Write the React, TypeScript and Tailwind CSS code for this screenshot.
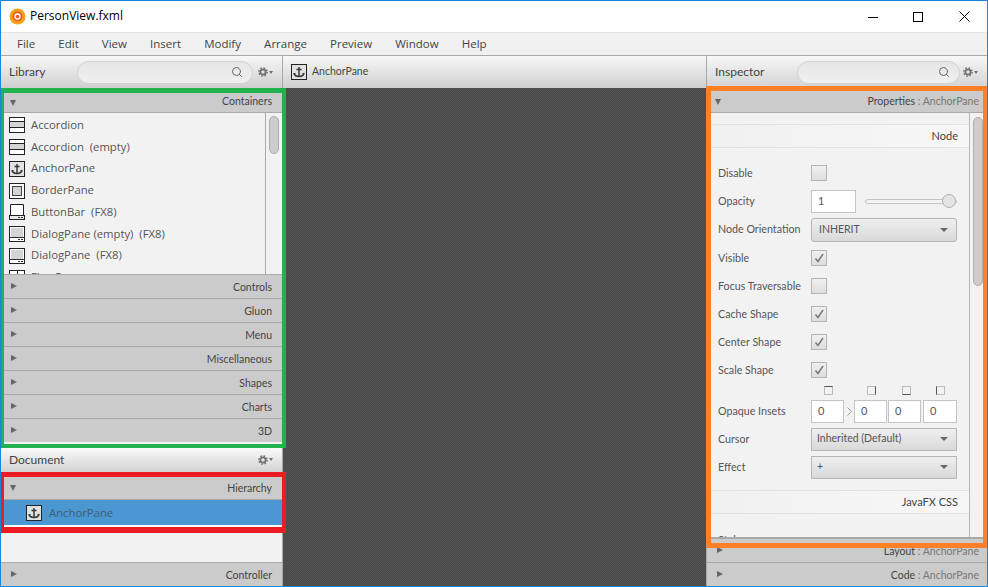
import { Search } from "lucide-react";

const font = { fontFamily: '"Open Sans", "Noto Sans", sans-serif' };
const narrow = { fontFamily: 'Lato, "Open Sans", sans-serif' };

const menus = ["File", "Edit", "View", "Insert", "Modify", "Arrange", "Preview", "Window", "Help"];

function AnchorIcon() {
  return (
    <svg width="16" height="16" viewBox="0 0 16 16" className="shrink-0">
      <rect x="0.5" y="0.5" width="15" height="15" fill="#e2e2e2" stroke="#222" />
      <path d="M8 3v9.500M5.500 5.500h5" fill="none" stroke="#333" strokeWidth="1.400" />
      <path d="M3 9.500c.8 2.500 2.500 3 5 3s4.200-.5 5-3" fill="none" stroke="#333" strokeWidth="1.500" />
      <path d="M2.500 9.500h2M11.500 9.500h2" stroke="#333" />
    </svg>
  );
}

function ItemIcon({ kind }: { kind: string }) {
  if (kind === "accordion") {
    return (
      <svg width="16" height="16" viewBox="0 0 16 16" className="shrink-0">
        <rect x="0.500" y="0.500" width="15" height="15" fill="#fff" stroke="#222" />
        <rect x="1" y="5" width="14" height="6" fill="#d4d4d4" />
        <path d="M0 4.500h16M0 10.500h16" stroke="#222" />
      </svg>
    );
  }
  if (kind === "border") {
    return (
      <svg width="16" height="16" viewBox="0 0 16 16" className="shrink-0">
        <rect x="0.500" y="0.500" width="15" height="15" fill="#fff" stroke="#222" />
        <rect x="3.500" y="3.500" width="9" height="9" fill="#d4d4d4" stroke="#444" />
      </svg>
    );
  }
  if (kind === "bar") {
    return (
      <svg width="16" height="16" viewBox="0 0 16 16" className="shrink-0">
        <path d="M1.500 11V.5h13V11" fill="#fff" stroke="#222" />
        <rect x="0.500" y="11.500" width="15" height="4" fill="#e8e8e8" stroke="#222" />
        <path d="M9 13.500h2M12 13.500h2" stroke="#333" />
      </svg>
    );
  }
  if (kind === "dialog") {
    return (
      <svg width="16" height="16" viewBox="0 0 16 16" className="shrink-0">
        <rect x="0.500" y="0.500" width="15" height="15" fill="#fff" stroke="#222" />
        <rect x="2" y="2" width="12" height="9" fill="#d4d4d4" />
        <path d="M0 11.500h16M9 13.500h2M12 13.500h2" stroke="#333" />
      </svg>
    );
  }
  return (
    <svg width="16" height="16" viewBox="0 0 16 16" className="shrink-0">
      <rect x="0.500" y="0.500" width="15" height="15" fill="#fff" stroke="#222" />
      <path d="M0 4.500h16M8.500 0v9M0 9.500h16" stroke="#333" />
    </svg>
  );
}

const libraryItems = [
  { kind: "accordion", label: "Accordion" },
  { kind: "accordion", label: "Accordion  (empty)" },
  { kind: "anchor", label: "AnchorPane" },
  { kind: "border", label: "BorderPane" },
  { kind: "bar", label: "ButtonBar  (FX8)" },
  { kind: "dialog", label: "DialogPane (empty)  (FX8)" },
  { kind: "dialog", label: "DialogPane  (FX8)" },
  { kind: "flow", label: "FlowPane" },
];

function Gear() {
  return (
    <span className="flex items-center">
      <svg width="10" height="10" viewBox="0 0 10 10">
        <circle cx="5" cy="5" r="2.700" fill="none" stroke="#6e6e6e" strokeWidth="1.800" />
        <circle cx="5" cy="5" r="4.200" fill="none" stroke="#6e6e6e" strokeWidth="1.300" strokeDasharray="1.650 1.650" />
      </svg>
      <span className="ml-px h-0 w-0 border-x-[2.500px] border-t-[3px] border-x-transparent border-t-[#6e6e6e]" />
    </span>
  );
}

function SearchBar({ width }: { width: string }) {
  return (
    <div className={`flex h-[23px] ${width} items-center justify-end rounded-full border border-[#d2d2d2] bg-gradient-to-b from-[#e6e6e6] to-[#f0f0f0] pr-[9px]`}>
      <Search size={12} className="text-[#666]" />
    </div>
  );
}

function Arrow({ open }: { open?: boolean }) {
  return open ? (
    <span className="h-0 w-0 border-x-[3.500px] border-t-[6px] border-x-transparent border-t-[#666]" />
  ) : (
    <span className="h-0 w-0 border-y-[3.500px] border-l-[6px] border-y-transparent border-l-[#666]" />
  );
}

function PaneHeader({ title, sub, pr = "pr-[10px]" }: { title: string; sub?: string; pr?: string }) {
  return (
    <div style={narrow} className={`flex h-[24px] shrink-0 items-center justify-between border-t border-[#a9a9a9] bg-[#cbcbcb] pl-[10px] ${pr} text-[10.500px] text-[#444]`}>
      <span className="flex pb-[1px]"><Arrow /></span>
      <span className="pt-[2px]">
        {title}
        {sub && <span className="text-[#777]"> : {sub}</span>}
      </span>
    </div>
  );
}

function Check({ checked }: { checked?: boolean }) {
  return (
    <div className="flex h-4 w-4 items-center justify-center border border-[#b5b5b5] bg-gradient-to-b from-[#f0f0f0] to-[#dedede]">
      {checked && (
        <svg width="12" height="12" viewBox="0 0 12 12">
          <path d="M2.500 6.500 5 9.500 10 2" fill="none" stroke="#777" strokeWidth="1.500" />
        </svg>
      )}
    </div>
  );
}

function Dropdown({ label, rounded }: { label: string; rounded?: boolean }) {
  return (
    <div className={`flex ${rounded ? "h-[24px] rounded-[3px] pl-[7px]" : "h-[23px] pl-[5px]"} w-[146px] items-center justify-between border border-[#b5b5b5] bg-gradient-to-b from-[#efefef] to-[#d9d9d9] pr-[8px] text-[10.500px] text-[#555]`}>
      <span>{label}</span>
      <span className="h-0 w-0 border-x-[4px] border-t-[4px] border-x-transparent border-t-[#666]" />
    </div>
  );
}

function Row({ label, h, children }: { label: string; h: string; children?: React.ReactNode }) {
  return (
    <div className={`flex ${h} items-center whitespace-nowrap text-[10.700px] text-[#555]`}>
      <span className="w-[93px]">{label}</span>
      {children}
    </div>
  );
}

function Band({ label }: { label: string }) {
  return (
    <div className="flex h-[24px] shrink-0 items-center justify-end border-y border-[#e2e2e2] bg-gradient-to-r from-[#f0f0f0] to-[#f7f7f7] pr-[11px] pt-[1px] text-[11px] text-[#444]">
      {label}
    </div>
  );
}

function InsetInput({ w }: { w: string }) {
  return <div className={`flex h-[23px] ${w} items-center border border-[#c4c4c4] bg-white pl-[6px] text-[11px] text-[#555]`}>0</div>;
}

function SideIcon({ edge }: { edge: string }) {
  return <div className={`h-[9px] w-[9px] border border-[#bbb] ${edge}`} />;
}

export default function App() {
  return (
    <div style={font} className="relative flex h-[587px] w-[988px] flex-col overflow-hidden border border-[#1a86d8] bg-white">
      {/* title bar */}
      <div className="flex h-[31px] shrink-0 items-center pl-[8px]">
        <svg width="17" height="17" viewBox="0 0 17 17">
          <circle cx="8.500" cy="8.500" r="8" fill="#f7a11a" />
          <circle cx="8.500" cy="8.500" r="5" fill="#ea5b25" />
          <circle cx="8.500" cy="8.500" r="2.500" fill="none" stroke="#fff" strokeWidth="1.300" />
        </svg>
        <span className="mb-[2px] ml-[4px] text-[12px] text-black">PersonView.fxml</span>
        <div className="ml-auto flex items-center gap-[35px] pr-[17px]">
          <svg width="10" height="10" viewBox="0 0 10 10"><path d="M0 5.500h10" stroke="#000" /></svg>
          <svg width="10" height="10" viewBox="0 0 10 10"><rect x="0.500" y="0.500" width="9" height="9" fill="none" stroke="#000" /></svg>
          <svg width="11" height="11" viewBox="0 0 11 11" className="ml-px"><path d="M.5.500l10 10M10.500.500l-10 10" stroke="#000" /></svg>
        </div>
      </div>

      {/* menu bar */}
      <div className="flex h-[24px] shrink-0 items-center gap-[23.100px] border-t border-b border-t-[#e4e4e4] border-b-[#a8a8a8] bg-[#f1f1f1] pl-[16px] text-[11.500px] text-[#444]">
        {menus.map((m) => (
          <span key={m}>{m}</span>
        ))}
      </div>

      <div className="flex min-h-0 flex-1">
        {/* left column */}
        <div className="flex w-[281px] shrink-0 flex-col bg-[#f2f2f2]">
          <div style={narrow} className="flex h-[32px] shrink-0 items-center bg-gradient-to-b from-[#f8f8f8] to-[#cfcfcf] pl-[8px] pr-[9px] text-[12px] text-[#444]">
            <span className="w-[68px]">Library</span>
            <SearchBar width="w-[176px]" />
            <span className="ml-auto"><Gear /></span>
          </div>
          <div className="h-[5px] shrink-0" />
          <div style={narrow} className="flex h-[19px] shrink-0 items-center justify-between bg-[#cbcbcb] pl-[9px] pr-[10px] text-[10.500px] text-[#444]">
            <Arrow open />
            <span className="pb-[1px]">Containers</span>
          </div>
          <div className="flex h-[162px] shrink-0 overflow-hidden border-t border-[#a9a9a9]">
            <div className="flex-1 overflow-hidden pl-[8px] pt-[1.500px]">
              {libraryItems.map((it) => (
                <div key={it.label} className="flex h-[21.750px] items-center gap-[6px] whitespace-pre text-[11.300px] text-[#555]">
                  {it.kind === "anchor" ? <AnchorIcon /> : <ItemIcon kind={it.kind} />}
                  <span>{it.label}</span>
                </div>
              ))}
            </div>
            <div className="w-[17px] shrink-0 border-l border-[#a9a9a9] pl-[3px] pt-[3px]">
              <div className="h-[38px] w-[10px] rounded-[5px] border border-[#adadad] bg-[#cdcdcd]" />
            </div>
          </div>
          {["Controls", "Gluon", "Menu", "Miscellaneous", "Shapes", "Charts", "3D"].map((s) => (
            <PaneHeader key={s} title={s} />
          ))}
          <div className="min-h-0 flex-1" />
          <div style={narrow} className="flex h-[25px] shrink-0 items-center justify-between bg-gradient-to-b from-[#fbfbfb] to-[#d2d2d2] pl-[8px] pr-[9px] text-[12px] text-[#444]">
            <span>Document</span>
            <Gear />
          </div>
          <div className="h-[5px] shrink-0" />
          <div style={narrow} className="flex h-[22px] shrink-0 items-center justify-between bg-[#cbcbcb] pl-[9px] pr-[10px] text-[10.500px] text-[#444]">
            <Arrow open />
            <span className="pt-[1px]">Hierarchy</span>
          </div>
          <div className="flex h-[26px] shrink-0 items-center gap-[7px] border-t border-[#a9a9a9] bg-[#4a97d2] pl-[25px] text-[11.300px] text-[#3f5d75]">
            <AnchorIcon />
            <span className="pt-[2px]">AnchorPane</span>
          </div>
          <div className="h-[3px] shrink-0 bg-white" />
          <div className="h-[34px] shrink-0" />
          <PaneHeader title="Controller" />
        </div>

        {/* center column */}
        <div className="flex min-w-0 flex-1 flex-col border-x border-[#a8a8a8]">
          <div style={narrow} className="flex h-[32px] shrink-0 items-center gap-[5px] bg-gradient-to-b from-[#f8f8f8] to-[#cfcfcf] pl-[8px] text-[10.500px] text-[#444]">
            <AnchorIcon />
            <span>AnchorPane</span>
          </div>
          <div className="flex-1 bg-[#4e4e4e] bg-[conic-gradient(#535353_25%,#494949_0_50%,#535353_0_75%,#494949_0)] bg-[size:2px_2px]" />
        </div>

        {/* right column */}
        <div style={narrow} className="flex w-[280px] shrink-0 flex-col bg-[#f2f2f2]">
          <div className="flex h-[32px] shrink-0 items-center bg-gradient-to-b from-[#f8f8f8] to-[#d2d2d2] pl-[8px] pr-[9px] text-[12px] text-[#444]">
            <span className="w-[82px]">Inspector</span>
            <SearchBar width="w-[163px]" />
            <span className="ml-auto"><Gear /></span>
          </div>
          <div className="h-[3px] shrink-0" />
          <div className="flex h-[21px] shrink-0 items-center justify-between bg-[#cbcbcb] pl-[8px] pr-[8px] text-[10.500px] text-[#444]">
            <Arrow open />
            <span>
              Properties <span className="text-[#777]">: AnchorPane</span>
            </span>
          </div>
          <div className="flex h-[426px] shrink-0 overflow-hidden border-t border-b border-[#a9a9a9]">
            <div className="flex min-w-0 flex-1 flex-col overflow-hidden pt-[11px]">
              <Band label="Node" />
              <div className="mt-[11px] shrink-0 pl-[11px] pr-[12px]">
                <Row label="Disable" h="h-[28px]"><Check /></Row>
                <Row label="Opacity" h="h-[28px]">
                  <div className="flex h-[23px] w-[45px] items-center border border-[#c4c4c4] bg-white pl-[6px]">1</div>
                  <div className="relative ml-[9px] h-[5px] w-[92px] rounded-full border border-[#c4c4c4] bg-[#f4f4f4]">
                    <div className="absolute right-0 top-[-6px] h-[14px] w-[14px] rounded-full border border-[#b0b0b0] bg-[#e4e4e4]" />
                  </div>
                </Row>
                <Row label="Node Orientation" h="h-[29px]"><Dropdown label="INHERIT" rounded /></Row>
                <Row label="Visible" h="h-[28px]"><Check checked /></Row>
                <Row label="Focus Traversable" h="h-[28px]"><Check /></Row>
                <Row label="Cache Shape" h="h-[28px]"><Check checked /></Row>
                <Row label="Center Shape" h="h-[28px]"><Check checked /></Row>
                <Row label="Scale Shape" h="h-[28px]"><Check checked /></Row>
                <div className="flex h-[13px] items-center pl-[106px]">
                  <SideIcon edge="border-t-[#555]" />
                  <span className="ml-[34px]"><SideIcon edge="border-r-[#555]" /></span>
                  <span className="ml-[26px]"><SideIcon edge="border-b-[#555]" /></span>
                  <span className="ml-[25px]"><SideIcon edge="border-l-[#555]" /></span>
                </div>
                <Row label="Opaque Insets" h="h-[28px]">
                  <InsetInput w="w-[33px]" />
                  <span className="flex w-[10px] justify-center">
                    <svg width="5" height="9" viewBox="0 0 5 9"><path d="M.5.500l4 4-4 4" fill="none" stroke="#999" /></svg>
                  </span>
                  <InsetInput w="w-[33px]" />
                  <span className="ml-px"><InsetInput w="w-[33px]" /></span>
                  <span className="ml-[2px]"><InsetInput w="w-[34px]" /></span>
                </Row>
                <Row label="Cursor" h="h-[28px]"><Dropdown label="Inherited (Default)" /></Row>
                <Row label="Effect" h="h-[28px]"><Dropdown label="+" /></Row>
              </div>
              <div className="mt-[9px] shrink-0"><Band label="JavaFX CSS" /></div>
              <div className="mt-[18px] shrink-0 pl-[11px] text-[11px] text-[#555]">Style</div>
            </div>
            <div className="w-[18px] shrink-0 border-l border-[#b5b5b5] pl-[3px] pt-[4px]">
              <div className="h-[169px] w-[10px] rounded-[5px] border border-[#adadad] bg-[#cdcdcd]" />
            </div>
          </div>
          <PaneHeader title="Layout" sub="AnchorPane" pr="pr-[8px]" />
          <PaneHeader title="Code" sub="AnchorPane" pr="pr-[8px]" />
        </div>
      </div>

      {/* annotation frames */}
      <div className="pointer-events-none absolute left-[-1px] top-[87px] h-[360px] w-[286px] border-[4px] border-t-[5px] border-[#22b14c]" />
      <div className="pointer-events-none absolute left-[-1px] top-[471px] h-[61px] w-[286px] border-[4px] border-t-[5px] border-b-[6px] border-[#ed1c24]" />
      <div className="pointer-events-none absolute left-[705px] top-[85px] h-[462px] w-[282px] border-[5px] border-[#ff7f27]" />
    </div>
  );
}
